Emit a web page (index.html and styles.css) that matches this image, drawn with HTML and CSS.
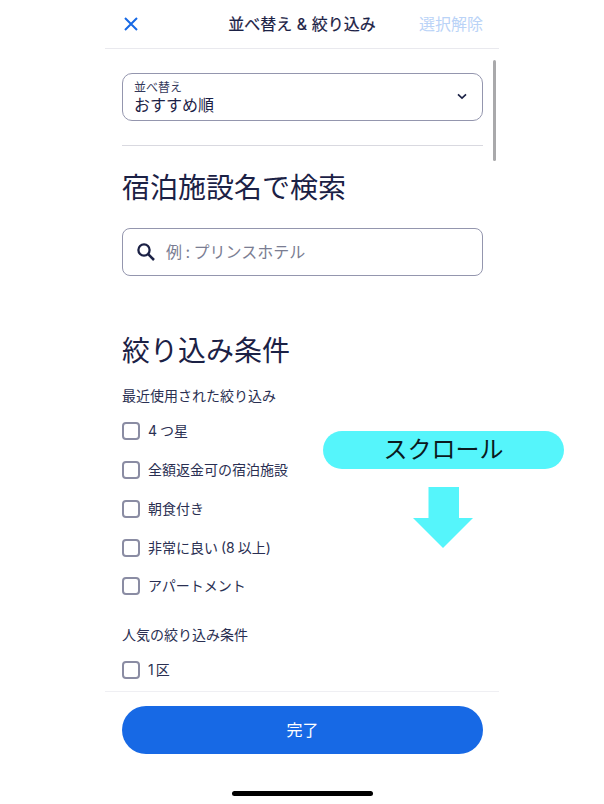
FILE: index.html
```html
<!DOCTYPE html>
<html lang="ja">
<head>
<meta charset="utf-8">
<title>並べ替え &amp; 絞り込み</title>
<link rel="stylesheet" href="styles.css">
</head>
<body>
<div class="app">
  <header class="topbar">
    <svg class="close" viewBox="0 0 16 16" width="16" height="16"><path d="M2 2 14 14M14 2 2 14" fill="none" stroke="#1769e5" stroke-width="2"/></svg>
    <h1 class="title">並べ替え &amp; 絞り込み</h1>
    <span class="clear">選択解除</span>
  </header>
  <main class="content">
    <div class="select">
      <div class="select-text">
        <span class="select-label">並べ替え</span>
        <span class="select-value">おすすめ順</span>
      </div>
      <svg class="chevron" viewBox="0 0 12 8" width="10" height="7"><path d="M1.2 1.4 6 6 10.8 1.4" fill="none" stroke="#1b2145" stroke-width="1.9"/></svg>
    </div>
    <hr class="divider">
    <h2 class="heading heading-search">宿泊施設名で検索</h2>
    <div class="search">
      <svg class="search-icon" viewBox="0 0 20 20" width="20" height="20"><circle cx="8" cy="8" r="5.6" fill="none" stroke="#1b2145" stroke-width="2.3"/><path d="M12.2 12.2 18 18" fill="none" stroke="#1b2145" stroke-width="2.5"/></svg>
      <span class="placeholder">例 : プリンスホテル</span>
    </div>
    <h2 class="heading heading-filter">絞り込み条件</h2>
    <h3 class="group">最近使用された絞り込み</h3>
    <ul class="checks">
      <li class="check"><span class="box"></span>4 つ星</li>
      <li class="check"><span class="box"></span>全額返金可の宿泊施設</li>
      <li class="check"><span class="box"></span>朝食付き</li>
      <li class="check"><span class="box"></span>非常に良い (8 以上)</li>
      <li class="check"><span class="box"></span>アパートメント</li>
    </ul>
    <h3 class="group group-popular">人気の絞り込み条件</h3>
    <ul class="checks">
      <li class="check check-tight"><span class="box"></span>1 区</li>
    </ul>
  </main>
  <footer class="footer">
    <button class="done">完了</button>
  </footer>
  <div class="homebar"></div>
  <div class="scrollbar"></div>
  <div class="note">スクロール</div>
  <svg class="arrow" viewBox="0 0 60 61" width="60" height="61"><path d="M15.500 0H46V31H60L30 61 0 31H15.500Z" fill="#55f5fb"/></svg>
</div>
</body>
</html>
```
FILE: styles.css
```css
* { box-sizing: border-box; }
html, body { margin: 0; padding: 0; background: #fff; }
body {
  font-family: Inter, "Noto Sans CJK JP", sans-serif;
  color: #1b2145;
  overflow: hidden;
}
.app {
  position: relative;
  width: 394px;
  height: 804px;
  margin-left: 105px;
  display: flex;
  flex-direction: column;
}
.topbar {
  flex: none;
  height: 49px;
  display: grid;
  grid-template-columns: 1fr auto 1fr;
  align-items: center;
  padding: 0 16px 1px 16px;
  border-bottom: 1px solid #e9e9ee;
}
.close { margin-left: 2px; }
.title {
  margin: 0;
  font-size: 16px;
  font-weight: 400;
  -webkit-text-stroke: 0.2px #1b2145;
  line-height: 22px;
  white-space: nowrap;
}
.clear { justify-self: end; font-size: 16px; line-height: 22px; color: #bad3f7; white-space: nowrap; }
.content {
  flex: 1;
  min-height: 0;
  overflow: hidden;
  padding: 24px 16px 0 17px;
}
.select {
  height: 48px;
  border: 1px solid #9496ae;
  border-radius: 10px;
  display: flex;
  align-items: center;
  justify-content: space-between;
  padding: 0 15px 0 11px;
}
.select-text { display: flex; flex-direction: column; margin-top: 1px; }
.select-label { font-size: 12px; line-height: 14px; color: #33385a; }
.select-value { font-size: 16px; line-height: 20px; }
.chevron { flex: none; margin-bottom: 1px; }
.divider { margin: 24px 0 0; border: 0; border-top: 1px solid #d9d9e0; }
.heading { margin: 0; font-size: 28px; font-weight: 400; line-height: 40px; }
.heading-search { margin-top: 22px; }
.search {
  margin-top: 20px;
  height: 48px;
  border: 1px solid #9496ae;
  border-radius: 8px;
  display: flex;
  align-items: center;
  gap: 10px;
  padding: 0 0 0 13px;
}
.search-icon { flex: none; }
.placeholder { font-size: 16px; line-height: 22px; color: #7a7d92; word-spacing: -1px; }
.heading-filter { margin-top: 55px; }
.group { margin: 15px 0 0; font-size: 14px; font-weight: 400; line-height: 20px; color: #2a2f52; }
.group-popular { margin-top: 19px; }
.checks { list-style: none; margin: 0; padding: 0; }
.check {
  height: 38.750px;
  display: flex;
  align-items: center;
  gap: 8px;
  font-size: 14px;
  line-height: 20px;
  color: #2a2f52;
  word-spacing: -1px;
}
.check-tight { word-spacing: -2px; }
.group + .checks { margin-top: 6px; }
.box {
  flex: none;
  width: 18px;
  height: 18px;
  border: 2px solid #8a8ca3;
  border-radius: 4px;
}
.footer {
  flex: none;
  height: 64px;
  padding: 14px 16px 0 17px;
  border-top: 1px solid #efeff3;
}
.done {
  display: block;
  width: 100%;
  height: 48px;
  border: 0;
  border-radius: 24px;
  background: #1769e5;
  color: #fff;
  font: inherit;
  font-size: 16px;
  line-height: 22px;
}
.homebar {
  flex: none;
  width: 141px;
  height: 5px;
  margin: 36px 0 8px 127px;
  background: #000;
  border-radius: 3px;
}
.scrollbar {
  position: absolute;
  left: 388px;
  top: 60px;
  width: 3px;
  height: 101px;
  background: #a9a9ab;
  border-radius: 2px;
}
.note {
  position: absolute;
  left: 218px;
  top: 431px;
  width: 241px;
  height: 38px;
  border-radius: 19px;
  background: #55f5fb;
  color: #0a1a20;
  font-size: 24px;
  line-height: 38px;
  text-align: center;
}
.arrow { position: absolute; left: 308px; top: 487px; }
```
